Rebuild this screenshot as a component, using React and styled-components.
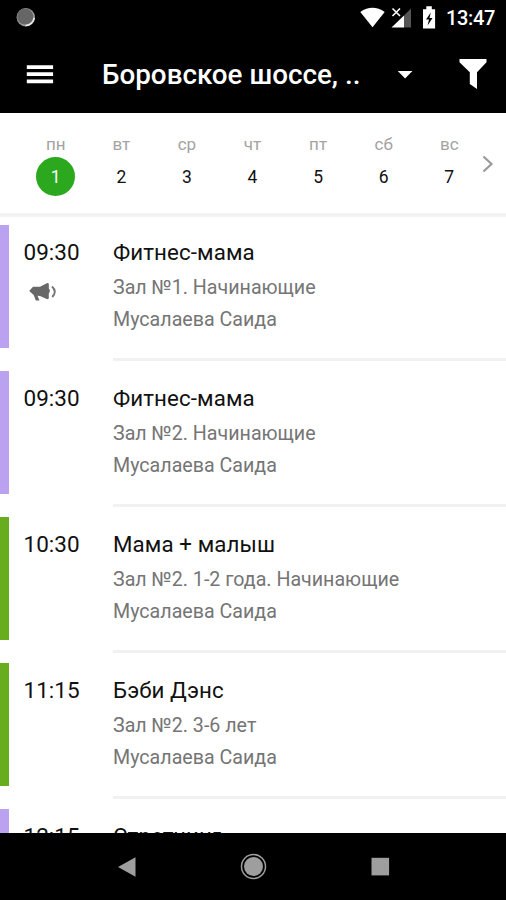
import React from "react";
import styled, { createGlobalStyle } from "styled-components";

const GlobalStyle = createGlobalStyle`
  * { box-sizing: border-box; }
  body { margin: 0; background: #fff; font-family: Roboto, "Noto Sans", sans-serif; }
`;

const Screen = styled.div`
  width: 506px;
  height: 900px;
  display: flex;
  flex-direction: column;
  overflow: hidden;
  background: #fff;
`;

const StatusBar = styled.div`
  flex: none;
  height: 36px;
  padding: 0 11px 0 15px;
  display: flex;
  align-items: center;
  justify-content: space-between;
  background: #000;
  color: #fff;
`;

const StatusIcons = styled.div`
  display: flex;
  align-items: center;
`;

const Clock = styled.span`
  font-size: 20px;
  line-height: 24px;
  font-weight: 500;
  width: 49px;
  letter-spacing: -0.35px;
  white-space: nowrap;
`;

const AppBar = styled.header`
  flex: none;
  height: 77px;
  padding: 0 19px 0 26px;
  display: flex;
  align-items: center;
  background: #000;
  color: #fff;
`;

const IconButton = styled.button`
  display: flex;
  padding: 0;
  border: 0;
  background: none;
  color: inherit;
`;

const ClubPicker = styled.button`
  flex: 1;
  display: flex;
  align-items: center;
  margin: 0 45px 0 48px;
  padding: 0;
  border: 0;
  background: none;
  color: inherit;
  font: 500 27.8px/32px Roboto, "Noto Sans", sans-serif;
  text-align: left;
  white-space: nowrap;
`;

const ClubName = styled.span`
  width: 295px;
`;

const Week = styled.nav`
  flex: none;
  height: 104px;
  padding: 0 12px 0 23px;
  display: flex;
  border-bottom: 4px solid #f3f3f3;
`;

const Day = styled.div`
  width: 65.65px;
  padding-top: 21px;
  display: flex;
  flex-direction: column;
  align-items: center;
`;

const DayName = styled.span`
  font-size: 17px;
  line-height: 20px;
  color: #a3a3a3;
`;

const DayNumber = styled.span`
  width: 39px;
  height: 39px;
  margin-top: 3px;
  border-radius: 50%;
  font-size: 17.5px;
  line-height: 40px;
  text-align: center;
  color: ${(p) => (p.$active ? "#fff" : "#111")};
  background: ${(p) => (p.$active ? "#2ba81e" : "transparent")};
`;

const NextWeek = styled(IconButton)`
  margin: 42px 0 0 0;
  height: 18px;
`;

const List = styled.main`
  flex: 1;
  min-height: 0;
  padding-top: 8px;
  overflow: hidden;
`;

const Lesson = styled.article`
  height: 146px;
  display: flex;
`;

const Stripe = styled.div`
  flex: none;
  width: 9px;
  height: 123px;
  margin-top: 0.4px;
  background: ${(p) => p.$color};
`;

const TimeColumn = styled.div`
  flex: none;
  width: 104px;
  padding: 13px 0 0 14.5px;
  color: #111;
`;

const Time = styled.div`
  font-size: 22.5px;
  line-height: 28px;
`;

const Megaphone = styled.svg`
  display: block;
  margin: 16px 0 0 5px;
`;

const Details = styled.div`
  flex: 1;
  height: 136px;
  padding-top: 13px;
  border-bottom: 3px solid #f1f1f1;
  white-space: nowrap;
`;

const Title = styled.div`
  height: 30px;
  font-size: 22.3px;
  line-height: 28px;
  letter-spacing: 0.1px;
  color: #111;
`;

const Line = styled.div`
  height: 32px;
  padding-top: 4px;
  font-size: 19.65px;
  line-height: 32px;
  color: #757575;
`;

const NavBar = styled.footer`
  flex: none;
  height: 67px;
  padding: 0 116px 0 117px;
  display: flex;
  align-items: center;
  justify-content: space-between;
  background: #000;
`;

const days = ["пн", "вт", "ср", "чт", "пт", "сб", "вс"];

const lessons = [
  { time: "09:30", title: "Фитнес-мама", hall: "Зал №1. Начинающие", coach: "Мусалаева Саида", color: "#bba2f1", promo: true },
  { time: "09:30", title: "Фитнес-мама", hall: "Зал №2. Начинающие", coach: "Мусалаева Саида", color: "#bba2f1" },
  { time: "10:30", title: "Мама + малыш", hall: "Зал №2. 1-2 года. Начинающие", coach: "Мусалаева Саида", color: "#68ad1d" },
  { time: "11:15", title: "Бэби Дэнс", hall: "Зал №2. 3-6 лет", coach: "Мусалаева Саида", color: "#68ad1d" },
  { time: "12:15", title: "Стретчинг", color: "#bba2f1" },
];

export default function App() {
  return (
    <Screen>
      <GlobalStyle />
      <StatusBar>
        <svg width="22" height="22" viewBox="0 0 22 22">
          <circle cx="10.8" cy="10.2" r="9.2" fill="#999" />
          <circle cx="10.2" cy="9.600" r="8" fill="#666" />
          <path d="M19.200 11A8.600 8.600 0 0 1 10.500 18.500" fill="none" stroke="#eee" strokeWidth="1.600" />
        </svg>
        <StatusIcons>
          <svg width="86" height="26" viewBox="0 0 86 26" fill="#fff">
            <path d="M.3 7Q12.500-1.300 24.700 7L12.500 22.300Z" />
            <path d="M31.500 22.500H44V10.500Z" />
            <path d="M44 10.500 51 3.500V22.500H44Z" fill="#555" />
            <path d="M32.500 3.500l7.500 7.500M40 3.500l-7.500 7.500" stroke="#fff" strokeWidth="1.600" />
            <path d="M63 4.300h3.300V1.300h5.500v3h3.300V23.500H63Z" />
            <path d="M70.800 7.500 66 14.500h3l-1.400 6 4.900-7.600h-3Z" fill="#000" />
          </svg>
          <Clock>13:47</Clock>
        </StatusIcons>
      </StatusBar>
      <AppBar>
        <IconButton aria-label="Меню">
          <svg width="28" height="20" viewBox="0 0 28 20" fill="#fff">
            <path d="M.8 .2h26.300v3.800H.8zM.8 7.300h26.300v3.800H.8zM.8 14.400h26.300v3.800H.8z" />
          </svg>
        </IconButton>
        <ClubPicker>
          <ClubName>Боровское шоссе, ..</ClubName>
          <svg width="16" height="8" viewBox="0 0 16 8" fill="#fff">
            <path d="M.8 .1h14.600L8.100 7.500Z" />
          </svg>
        </ClubPicker>
        <IconButton aria-label="Фильтр">
          <svg width="28" height="31" viewBox="0 0 28 31" fill="#fff">
            <path d="M.5 0h27v3.200L18 13.200V30L10.800 25V13.200L.5 3.200Z" />
          </svg>
        </IconButton>
      </AppBar>
      <Week>
        {days.map((name, i) => (
          <Day key={name}>
            <DayName>{name}</DayName>
            <DayNumber $active={i === 0}>{i + 1}</DayNumber>
          </Day>
        ))}
        <NextWeek aria-label="Следующая неделя">
          <svg width="12" height="18" viewBox="0 0 12 18">
            <path d="M1.500 1.500 9.500 9l-8 7.500" fill="none" stroke="#999" strokeWidth="2.200" />
          </svg>
        </NextWeek>
      </Week>
      <List>
        {lessons.map((l, i) => (
          <Lesson key={i}>
            <Stripe $color={l.color} />
            <TimeColumn>
              <Time>{l.time}</Time>
              {l.promo && (
                <Megaphone width="29" height="20" viewBox="0 0 29 20" fill="#686868">
                  <path d="M.2 9 4 4.800 11 4.700 18.300 1 19.800 1.500V6.500Q22 8.500 19.800 11.500V16.500L18.300 17.300 11 14 8.500 13.800 10.500 18.500H6.800L4.700 13Z" />
                  <path d="M23 4.500q5.500 5 .2 10.500" fill="none" stroke="#777" strokeWidth="2" />
                </Megaphone>
              )}
            </TimeColumn>
            <Details>
              <Title>{l.title}</Title>
              <Line>{l.hall}</Line>
              <Line>{l.coach}</Line>
            </Details>
          </Lesson>
        ))}
      </List>
      <NavBar>
        <svg width="19" height="20" viewBox="0 0 19 20" fill="#9e9e9e">
          <path d="M18.500 .3V19.700L1 10Z" />
        </svg>
        <svg width="27" height="27" viewBox="0 0 27 27">
          <circle cx="13.500" cy="13.500" r="12" fill="none" stroke="#9e9e9e" strokeWidth="1.500" />
          <circle cx="13.500" cy="13.500" r="9.500" fill="#9e9e9e" />
        </svg>
        <svg width="19" height="19" viewBox="0 0 19 19">
          <path d="M.5 .8h17.600v17.600H.5z" fill="#9e9e9e" />
        </svg>
      </NavBar>
    </Screen>
  );
}
